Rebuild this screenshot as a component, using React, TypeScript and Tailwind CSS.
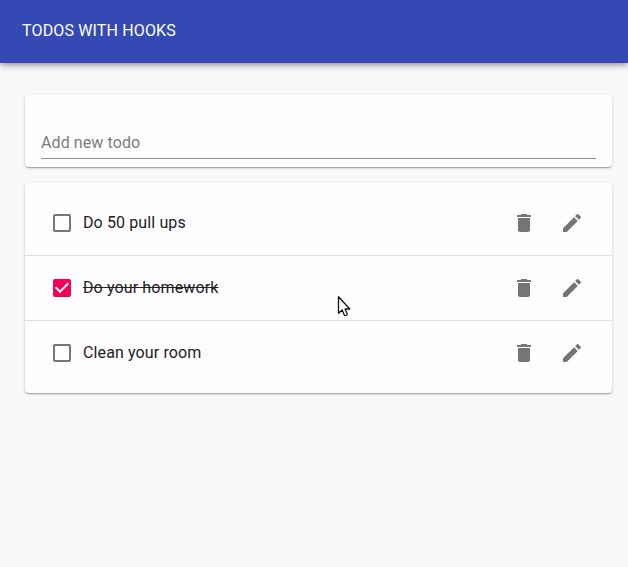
import React from "react";
import { MdDelete, MdEdit, MdCheckBox, MdCheckBoxOutlineBlank } from "react-icons/md";

const todos = [
  { title: "Do 50 pull ups", done: false },
  { title: "Do your homework", done: true },
  { title: "Clean your room", done: false },
];

const paper =
  "rounded bg-[#fffdff] shadow-[0_1px_3px_0_rgba(0,0,0,0.2),0_1px_1px_0_rgba(0,0,0,0.14),0_2px_1px_-1px_rgba(0,0,0,0.12)]";

export default function App() {
  return (
    <div className="relative h-[567px] w-[628px] overflow-hidden bg-[#f9f7fa] font-[Roboto,sans-serif] text-base tracking-[0.12px] text-[#212124]">
      <header className="flex h-[63px] items-center bg-[#3549b4] px-[22px] pb-[2px] tracking-[0.15px] text-white shadow-[0_2px_4px_-1px_rgba(0,0,0,0.2),0_4px_5px_0_rgba(0,0,0,0.14),0_1px_10px_0_rgba(0,0,0,0.12)]">
        <h1>TODOS WITH HOOKS</h1>
      </header>
      <main className="flex flex-col gap-4 pl-[25px] pr-4 pt-8">
        <form className={`h-[72px] px-4 pt-8 ${paper}`}>
          <input
            className="block h-8 w-full border-b border-[#8f8d91] bg-transparent tracking-[0.1px] outline-none placeholder:text-[#7d7b7e]"
            placeholder="Add new todo"
          />
        </form>
        <ul className={`py-2 ${paper}`}>
          {todos.map((t, i) => (
            <li
              key={t.title}
              className={`flex items-center pl-[25px] pr-7 ${i < 2 ? "h-[65px] border-b border-[#dfdde0]" : "h-16"}`}
            >
              {t.done ? (
                <MdCheckBox className="size-6 text-[#f50057]" />
              ) : (
                <MdCheckBoxOutlineBlank className="size-6 text-[#757477]" />
              )}
              <span className={`ml-[9px] flex-1 ${t.done ? "line-through" : ""}`}>{t.title}</span>
              <MdDelete className="size-6 text-[#757477]" />
              <MdEdit className="ml-6 size-6 text-[#757477]" />
            </li>
          ))}
        </ul>
      </main>
      <svg className="absolute left-[337px] top-[295px]" width="14" height="22" viewBox="0 0 14 22">
        <path
          d="M1.5 1.8v16.5l3.7-3.4 2.1 5q.4.9 1.3.6l1-.4q.9-.4.5-1.3L8.1 14h4.7z"
          fill="#fff"
          stroke="#111"
          strokeWidth="1.3"
          strokeLinejoin="round"
        />
      </svg>
    </div>
  );
}
